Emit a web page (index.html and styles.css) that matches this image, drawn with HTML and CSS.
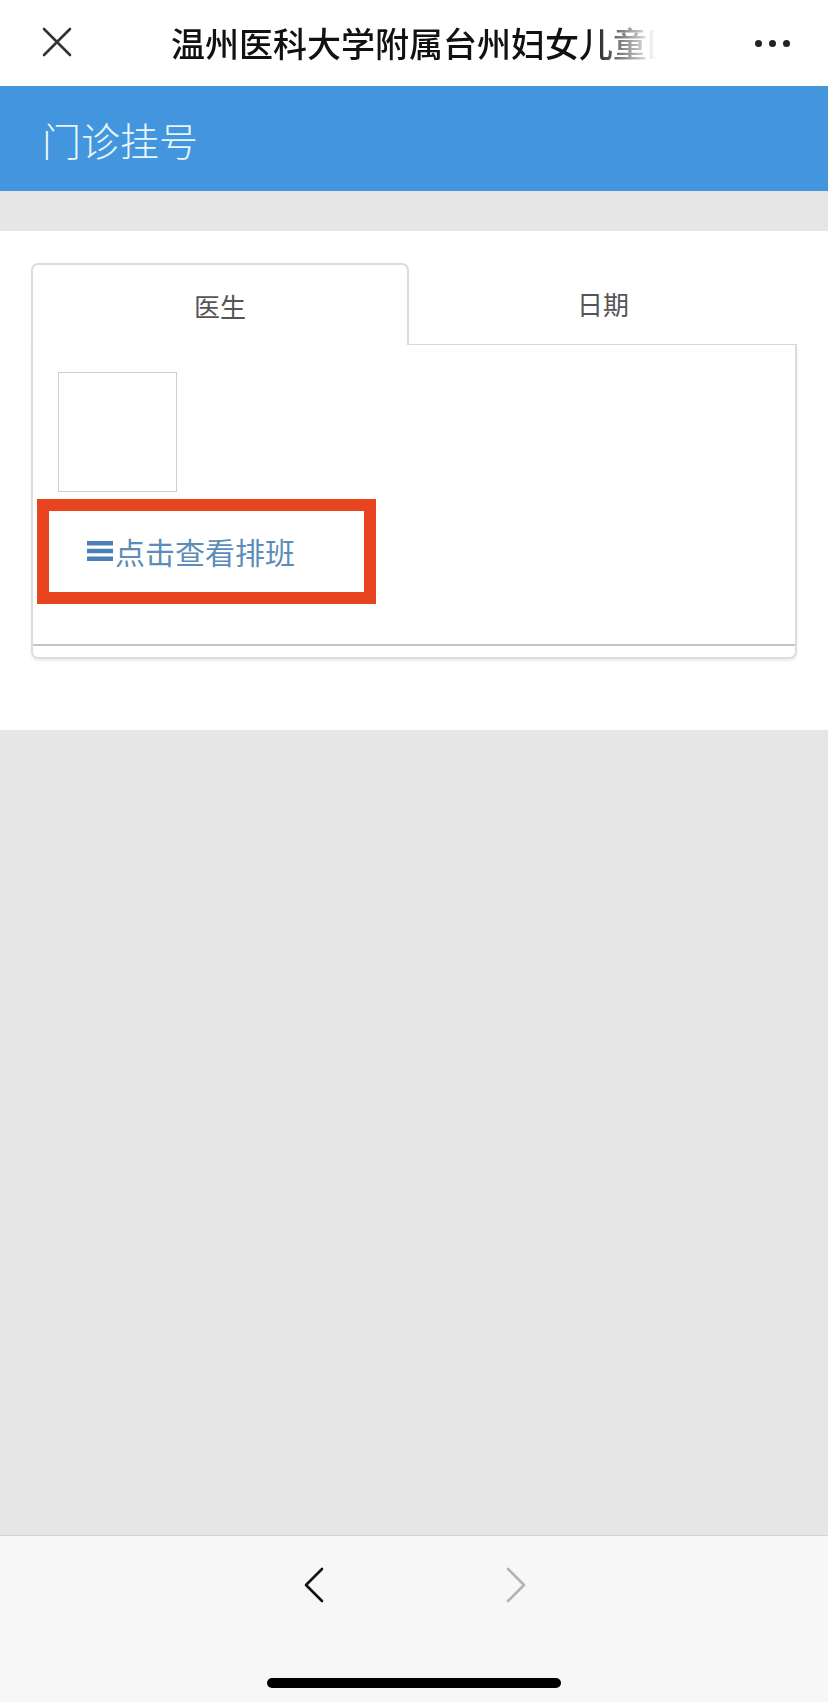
FILE: index.html
```html
<!DOCTYPE html>
<html lang="zh-CN">
<head>
<meta charset="utf-8">
<title>门诊挂号</title>
<link rel="stylesheet" href="styles.css">
</head>
<body>
<div class="screen">
  <div class="navbar">
    <svg class="nav-close" viewBox="0 0 30 30" width="30" height="30"><path d="M2 2 L28 28 M28 2 L2 28" stroke="#333" stroke-width="2.6" fill="none" stroke-linecap="round"/></svg>
    <div class="nav-title">温州医科大学附属台州妇女儿童医院</div>
    <div class="nav-more"><span></span><span></span><span></span></div>
  </div>
  <div class="page-header">门诊挂号</div>
  <div class="spacer"></div>
  <div class="content">
    <div class="tabs">
      <div class="tab active">医生</div>
      <div class="tab">日期</div>
    </div>
    <div class="panel">
      <div class="photo"></div>
      <div class="schedule-link">
        <svg class="menu-icon" viewBox="0 0 26 20" width="26" height="20"><rect x="0" y="0" width="26" height="4.5" fill="#4a80b5"/><rect x="0" y="7.75" width="26" height="4.5" fill="#4a80b5"/><rect x="0" y="15.5" width="26" height="4.5" fill="#4a80b5"/></svg>
        <span>点击查看排班</span>
      </div>
      <div class="panel-rule"></div>
    </div>
  </div>
  <div class="fill"></div>
  <div class="toolbar">
    <div class="toolbar-nav">
      <svg class="chev" viewBox="0 0 20 36" width="20" height="36"><path d="M18 2 L2 18 L18 34" stroke="#111" stroke-width="2.6" fill="none" stroke-linecap="round" stroke-linejoin="round"/></svg>
      <svg class="chev" viewBox="0 0 20 36" width="20" height="36"><path d="M2 2 L18 18 L2 34" stroke="#b3b3b3" stroke-width="2.6" fill="none" stroke-linecap="round" stroke-linejoin="round"/></svg>
    </div>
    <div class="home-indicator"></div>
  </div>
</div>
</body>
</html>
```

FILE: styles.css
```css
* { box-sizing: border-box; }
html, body { margin: 0; padding: 0; }
body {
  width: 828px;
  height: 1702px;
  background: #e6e6e6;
  font-family: "Noto Sans CJK SC", "Noto Sans", sans-serif;
  overflow: hidden;
}
.screen {
  display: flex;
  flex-direction: column;
  height: 1702px;
}
.navbar {
  height: 86px;
  background: #fff;
  display: flex;
  align-items: center;
  flex-shrink: 0;
}
.nav-close {
  margin-left: 42px;
  margin-top: -2px;
  flex-shrink: 0;
}
.nav-title {
  margin-left: 99px;
  width: 500px;
  overflow: hidden;
  white-space: nowrap;
  font-size: 34px;
  font-weight: 500;
  color: #111;
  line-height: 40px;
  -webkit-mask-image: linear-gradient(to right, #000 84%, transparent 97%);
  mask-image: linear-gradient(to right, #000 84%, transparent 97%);
}
.nav-more {
  margin-left: auto;
  margin-right: 38px;
  display: flex;
  gap: 7px;
}
.nav-more span {
  width: 7px;
  height: 7px;
  border-radius: 50%;
  background: #222;
}
.page-header {
  height: 105px;
  background: #4396de;
  color: #eaf6f8;
  font-size: 39px;
  font-weight: 300;
  padding-left: 42px;
  display: flex;
  align-items: center;
  flex-shrink: 0;
}
.spacer {
  height: 40px;
  background: #e6e6e6;
  flex-shrink: 0;
}
.content {
  background: #fff;
  padding: 32px 31px 71px 31px;
  flex-shrink: 0;
}
.tabs {
  display: flex;
  height: 82px;
}
.tab {
  flex: 1;
  display: flex;
  align-items: center;
  justify-content: center;
  font-size: 26px;
  color: #555;
  border-bottom: 1px solid #d9d9d9;
}
.tab.active {
  flex: 0 0 378px;
  border: 2px solid #dcdcdc;
  border-bottom: none;
  border-radius: 7px 7px 0 0;
}
.panel {
  border: 2px solid #dcdcdc;
  border-top: none;
  border-radius: 0 0 7px 7px;
  box-shadow: 0 2px 3px rgba(0,0,0,0.08);
  padding-top: 27px;
  padding-bottom: 11px;
}
.photo {
  width: 119px;
  height: 120px;
  margin-left: 25px;
  border: 1px solid #cfcfcf;
}
.schedule-link {
  margin-top: 7px;
  margin-left: 4px;
  width: 339px;
  height: 105px;
  border: 12px solid #e8441f;
  display: flex;
  align-items: center;
  padding-left: 38px;
  padding-bottom: 2px;
  color: #5b8db8;
  font-size: 30px;
}
.menu-icon {
  margin-right: 2px;
  flex-shrink: 0;
}
.panel-rule {
  margin-top: 40px;
  height: 2px;
  background: #c4c4c4;
}
.fill {
  flex: 1;
  background: #e6e6e6;
}
.toolbar {
  height: 167px;
  background: #f7f7f7;
  border-top: 1px solid #d3d3d3;
  flex-shrink: 0;
  display: flex;
  flex-direction: column;
  align-items: center;
}
.toolbar-nav {
  margin-top: 31px;
  display: flex;
  gap: 182px;
  margin-left: 2px;
}
.home-indicator {
  margin-top: 75px;
  width: 294px;
  height: 10px;
  border-radius: 5px;
  background: #000;
}
```
